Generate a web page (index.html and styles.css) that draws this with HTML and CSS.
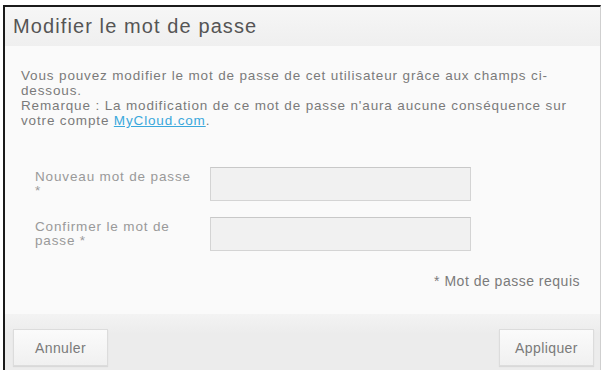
FILE: index.html
```html
<!DOCTYPE html>
<html lang="fr">
<head>
<meta charset="utf-8">
<title>Modifier le mot de passe</title>
<link rel="stylesheet" href="styles.css">
</head>
<body>
<div class="dialog">
  <div class="dialog-header">
    <h1 class="dialog-title">Modifier le mot de passe</h1>
  </div>
  <div class="dialog-body">
    <p class="intro">Vous pouvez modifier le mot de passe de cet utilisateur grâce aux champs ci-dessous.<br>Remarque : La modification de ce mot de passe n'aura aucune conséquence sur votre compte <a class="link" href="#">MyCloud.com</a>.</p>
    <div class="form">
      <div class="form-row">
        <label class="form-label">Nouveau mot de passe *</label>
        <input class="form-input" type="password">
      </div>
      <div class="form-row">
        <label class="form-label">Confirmer le mot de passe *</label>
        <input class="form-input" type="password">
      </div>
    </div>
    <p class="required">* Mot de passe requis</p>
  </div>
  <div class="dialog-footer">
    <button class="btn">Annuler</button>
    <button class="btn">Appliquer</button>
  </div>
</div>
</body>
</html>
```
FILE: styles.css
```css
html, body {
  margin: 0;
  padding: 0;
  background: #ffffff;
  height: 100%;
  overflow: hidden;
}
body {
  font-family: "Liberation Sans", Arial, sans-serif;
  color: #777;
}
.dialog {
  margin: 5px 0 0 3px;
  width: 598px;
  height: 365px;
  border-top: 2px solid #1a1a1a;
  border-left: 2px solid #1a1a1a;
  border-right: 1px solid #cfcfcf;
  display: flex;
  flex-direction: column;
  box-sizing: border-box;
  background: #fafafa;
}
.dialog-header {
  height: 39px;
  background: linear-gradient(#f6f6f6, #efefef);
  display: flex;
  align-items: center;
  padding-left: 8px;
}
.dialog-title {
  margin: 0;
  font-weight: normal;
  font-size: 20px;
  color: #555;
  letter-spacing: 1.1px;
}
.dialog-body {
  flex: 1;
  padding: 22px 16px 0 16px;
  background: #fafafa;
}
.intro {
  margin: 0;
  font-size: 13.5px;
  line-height: 15px;
  letter-spacing: 0.85px;
  color: #7a7a7a;
}
.link {
  color: #3aa8dc;
  text-decoration: underline;
}
.form {
  margin-top: 39px;
  margin-left: 14px;
  display: flex;
  flex-direction: column;
  gap: 16px;
}
.form-row {
  display: flex;
  align-items: flex-start;
}
.form-label {
  width: 165px;
  margin-right: 10px;
  font-size: 13.5px;
  line-height: 14px;
  letter-spacing: 0.85px;
  color: #999;
  padding-top: 3px;
}
.form-input {
  width: 261px;
  height: 34px;
  box-sizing: border-box;
  border: 1px solid #d4d4d4;
  border-top-color: #c8c8c8;
  background: #f1f1f1;
  margin: 0;
}
.required {
  margin: 22px 4px 0 0;
  text-align: right;
  font-size: 14px;
  line-height: 16px;
  letter-spacing: 0.5px;
  color: #7a7a7a;
}
.dialog-footer {
  height: 56px;
  background: linear-gradient(#f3f3f3, #ececec 20px);
  display: flex;
  justify-content: space-between;
  align-items: flex-start;
  padding: 15px 6px 0 8px;
  box-sizing: border-box;
}
.btn {
  width: 95px;
  height: 37px;
  border: 1px solid #dcdcdc;
  background: linear-gradient(#fbfbfb, #f0f0f0);
  font-family: "Liberation Sans", Arial, sans-serif;
  font-size: 14px;
  letter-spacing: 0.4px;
  color: #7a7a7a;
  box-shadow: 0 1px 1px rgba(0,0,0,0.08);
}
```
